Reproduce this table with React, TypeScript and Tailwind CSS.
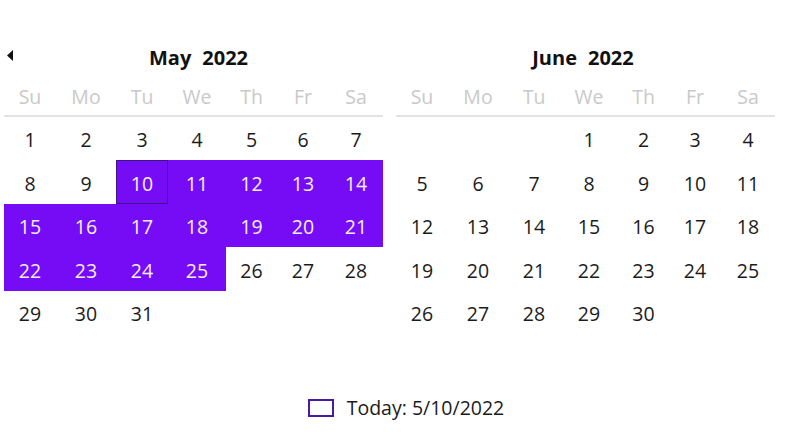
import React from "react"

const COLS = ["w-[52px]", "w-[60px]", "w-[52px]", "w-[58px]", "w-[51px]", "w-[52px]", "w-[54px]"]
const DAYS = ["Su", "Mo", "Tu", "We", "Th", "Fr", "Sa"]

function weeks(offset: number, total: number) {
  const cells: (number | null)[] = []
  for (let i = 0; i < offset; i++) cells.push(null)
  for (let d = 1; d <= total; d++) cells.push(d)
  while (cells.length % 7) cells.push(null)
  const out: (number | null)[][] = []
  for (let i = 0; i < cells.length; i += 7) out.push(cells.slice(i, i + 7))
  return out
}

function Month({
  name,
  offset,
  total,
  from,
  to,
  today,
  prev,
}: {
  name: string
  offset: number
  total: number
  from?: number
  to?: number
  today?: number
  prev?: boolean
}) {
  const rows = weeks(offset, total)
  return (
    <div className="w-[379px]">
      <div className="flex h-[28px] items-center">
        {prev ? (
          <button className="flex w-[10px] h-[28px] items-center justify-end pr-[1px] -mt-[5px]">
            <svg width="6" height="11" viewBox="0 0 6 11">
              <path d="M6 0 L0 5.5 L6 11 Z" fill="#111" />
            </svg>
          </button>
        ) : null}
        <div className="flex-1 flex justify-center gap-[11px] text-[20px] font-bold text-[#111]">
          <span>{name}</span>
          <span>2022</span>
        </div>
        {prev ? null : <div className="w-[5px]" />}
      </div>
      <div className="flex h-[45px] border-b-2 border-[#e3e3e3]">
        {DAYS.map((d, i) => (
          <div key={d} className={`${COLS[i]} flex items-end justify-center pb-[4px] text-[#c9c9c9]`}>
            {d}
          </div>
        ))}
      </div>
      {rows.map((r, ri) => (
        <div key={ri} className={`flex ${ri % 2 === 1 ? "h-[44px]" : "h-[43px]"}`}>
          {r.map((d, i) => {
            const sel = d !== null && from !== undefined && to !== undefined && d >= from && d <= to
            return (
              <div
                key={i}
                className={`${COLS[i]} flex items-center justify-center pt-[3px] ${
                  sel ? "bg-[#760cf5] text-[#f4eeff]" : "text-[#1b1b1b]"
                } ${d === today ? "shadow-[inset_0_0_0_1px_#3a1688]" : ""}`}
              >
                {d}
              </div>
            )
          })}
        </div>
      ))}
    </div>
  )
}

export default function App() {
  return (
    <div className="w-[787px] h-[447px] bg-white font-['Open_Sans',sans-serif] text-[19.5px]">
      <div className="flex gap-[13px] pl-[4px] pt-[44px]">
        <Month name="May" offset={0} total={31} from={10} to={25} today={10} prev />
        <Month name="June" offset={3} total={30} />
      </div>
      <div className="flex justify-center items-center gap-[13px] pl-[25px] mt-[59px]">
        <div className="w-[26px] h-[18px] border-2 border-[#4a1aa3]" />
        <span className="text-[#1b1b1b]">Today: 5/10/2022</span>
      </div>
    </div>
  )
}
